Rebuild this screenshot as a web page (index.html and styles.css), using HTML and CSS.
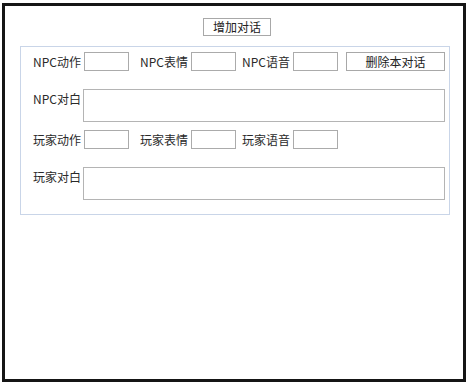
FILE: index.html
```html
<!DOCTYPE html>
<html lang="zh-CN">
<head>
  <meta charset="UTF-8">
  <meta name="viewport" content="width=device-width, initial-scale=1.0">
  <title>对话编辑</title>
  <link rel="stylesheet" href="styles.css">
</head>
<body>
  <div class="frame">
    <div class="toolbar">
      <button class="btn add-btn">增加对话</button>
    </div>

    <div class="dialog-box">
      <div class="row">
        <label class="field"><span class="lbl">NPC动作</span><input type="text" class="small-input"></label>
        <label class="field"><span class="lbl">NPC表情</span><input type="text" class="small-input"></label>
        <label class="field"><span class="lbl">NPC语音</span><input type="text" class="small-input"></label>
        <button class="btn del-btn">删除本对话</button>
      </div>
      <div class="row text-row">
        <span class="lbl">NPC对白</span>
        <textarea class="line-text"></textarea>
      </div>
      <div class="row">
        <label class="field"><span class="lbl">玩家动作</span><input type="text" class="small-input"></label>
        <label class="field"><span class="lbl">玩家表情</span><input type="text" class="small-input"></label>
        <label class="field"><span class="lbl">玩家语音</span><input type="text" class="small-input"></label>
      </div>
      <div class="row text-row">
        <span class="lbl">玩家对白</span>
        <textarea class="line-text"></textarea>
      </div>
    </div>
  </div>
</body>
</html>
```

FILE: styles.css
```css
body {
  margin: 0;
  font-family: "Noto Sans CJK SC", "Noto Sans", sans-serif;
  font-size: 12px;
  color: #2a2a2a;
  background: #fff;
}
.frame {
  box-sizing: border-box;
  width: 464px;
  height: 379px;
  margin: 3px 2px;
  border: 3px solid #151515;
  padding: 12px 13px 0 15px;
}
.toolbar {
  display: flex;
  justify-content: center;
  padding-left: 4px;
}
.btn {
  font-family: inherit;
  font-size: 12px;
  color: #222;
  background: #fff;
  border: 1px solid #a8a8a8;
  padding: 0;
  height: 18px;
  line-height: 16px;
}
.add-btn {
  width: 68px;
}
.dialog-box {
  margin-top: 10px;
  border: 1px solid #c9d5e8;
  padding: 5px 4px 14px 12px;
}
.row {
  display: flex;
  align-items: center;
}
.field {
  display: flex;
  align-items: center;
  margin-right: 11px;
}
.field:nth-child(2) {
  margin-right: 6px;
}
.lbl {
  width: 51px;
  line-height: 16px;
  white-space: nowrap;
}
.small-input {
  box-sizing: border-box;
  width: 45px;
  height: 19px;
  margin: 0;
  border: 1px solid #ababab;
  padding: 0 2px;
}
.del-btn {
  width: 101px;
  height: 19px;
  margin-left: -3px;
}
.text-row {
  align-items: flex-start;
  margin: 18px 0 8px;
}
.text-row:last-child {
  margin-bottom: 0;
}
.text-row .lbl {
  padding-top: 2px;
}
.line-text {
  box-sizing: border-box;
  width: 362px;
  height: 33px;
  margin: 0 0 0 -1px;
  border: 1px solid #b4b4b4;
  resize: none;
}
```
